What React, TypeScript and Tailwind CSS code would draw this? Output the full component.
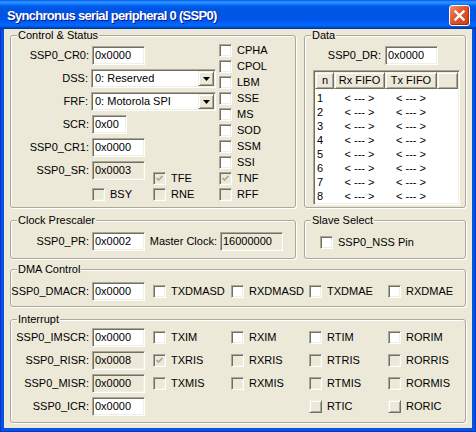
import React from "react";

// Classic XP edges
const sunken =
  "border border-t-[#aca899] border-l-[#aca899] border-b-white border-r-white shadow-[inset_1px_1px_0_#716f64,inset_-1px_-1px_0_#f1efe2]";
const raised =
  "border border-t-[#f1efe2] border-l-[#f1efe2] border-b-[#716f64] border-r-[#716f64] shadow-[inset_1px_1px_0_#fff,inset_-1px_-1px_0_#aca899] bg-[#ece9d8]";

function Group({ title, className, children }: { title: string; className: string; children?: React.ReactNode }) {
  return (
    <fieldset
      className={`min-w-0 rounded-[3px] border border-[#aca899] shadow-[inset_1px_1px_0_#fff,1px_1px_0_#fff] ${className}`}
    >
      <legend className="ml-[6px] bg-[#ece9d8] px-[1px] leading-[13px]">{title}</legend>
      {children}
    </fieldset>
  );
}

function Edit({ value, w, disabled }: { value: string; w: string; disabled?: boolean }) {
  return (
    <div
      className={`flex h-[19px] items-center whitespace-nowrap pl-[2px] leading-[13px] ${w} ${sunken} ${
        disabled ? "bg-[#ece9d8]" : "bg-white"
      }`}
    >
      {value}
    </div>
  );
}

function Combo({ value }: { value: string }) {
  return (
    <div className={`flex h-[19px] w-[125px] items-center bg-white pl-[3px] ${sunken}`}>
      <span className="flex-1 whitespace-nowrap leading-[13px]">{value}</span>
      <div className={`mr-[1px] flex h-[15px] w-[16px] items-center justify-center ${raised}`}>
        <svg width="7" height="4" viewBox="0 0 7 4">
          <polygon points="0,0 7,0 3.5,4" fill="#000" />
        </svg>
      </div>
    </div>
  );
}

function Box({ checked, disabled, button }: { checked?: boolean; disabled?: boolean; button?: boolean }) {
  if (button) return <div className={`h-[13px] w-[13px] shrink-0 ${raised}`} />;
  return (
    <div
      className={`flex h-[13px] w-[13px] shrink-0 items-center justify-center ${sunken} ${
        disabled ? "bg-[#ece9d8]" : "bg-white"
      }`}
    >
      {checked && (
        <svg width="9" height="9" viewBox="0 0 9 9">
          <polyline points="1.5,4 3.5,6 7.5,2" fill="none" stroke="#aca899" strokeWidth="1.7" />
        </svg>
      )}
    </div>
  );
}

function Check({
  label,
  checked,
  disabled,
  button,
  className = "",
}: {
  label: string;
  checked?: boolean;
  disabled?: boolean;
  button?: boolean;
  className?: string;
}) {
  return (
    <div className={`flex h-[13px] items-center gap-[5px] ${className}`}>
      <Box checked={checked} disabled={disabled} button={button} />
      <span className="whitespace-nowrap leading-[13px]">{label}</span>
    </div>
  );
}

function Row({ label, children }: { label: string; children: React.ReactNode }) {
  return (
    <div className="flex items-center">
      <span className="w-[78px] whitespace-nowrap text-right leading-[13px]">{label}</span>
      <div className="ml-[3px]">{children}</div>
    </div>
  );
}

const bits = [
  { n: "CPHA" },
  { n: "CPOL" },
  { n: "LBM" },
  { n: "SSE" },
  { n: "MS" },
  { n: "SOD" },
  { n: "SSM" },
  { n: "SSI" },
  { n: "TNF", checked: true, disabled: true },
  { n: "RFF", disabled: true },
];

const interrupts = [
  { reg: "SSP0_IMSCR:", value: "0x0000", ro: false, bits: ["TXIM", "RXIM", "RTIM", "RORIM"] },
  { reg: "SSP0_RISR:", value: "0x0008", ro: true, bits: ["TXRIS", "RXRIS", "RTRIS", "RORRIS"] },
  { reg: "SSP0_MISR:", value: "0x0000", ro: true, bits: ["TXMIS", "RXMIS", "RTMIS", "RORMIS"] },
];

export default function App() {
  return (
    <div className="flex h-[432px] w-[476px] flex-col border-x border-b border-[#0831d9] bg-[#0855dd] font-['Liberation_Sans',Arial,sans-serif] text-[11px] text-black">
      {/* Title bar */}
      <div className="-mx-px flex h-[29px] shrink-0 items-start justify-between bg-[linear-gradient(to_bottom,#0058ee_0%,#3593ff_7%,#288eff_10%,#127dff_14%,#036ffc_17%,#0262ee_20%,#0057e5_24%,#0054e3_56%,#0055eb_66%,#005bf5_76%,#026afe_86%,#0062ef_90%,#0052d6_93%,#0040ab_97%,#003092_100%)] pl-[7px] pr-[6px]">
        <span className="mt-[8px] whitespace-nowrap text-[13px] font-bold leading-[16px] tracking-[-0.7px] text-white [text-shadow:1px_1px_0_#0a1883]">
          Synchronus serial peripheral 0 (SSP0)
        </span>
        <div className="mt-[5px] flex h-[21px] w-[21px] items-center justify-center rounded-[3px] border border-white bg-[linear-gradient(135deg,#f0906c_0%,#e35a31_40%,#c8411a_100%)] shadow-[inset_-1px_-1px_1px_#a12b0c]">
          <svg width="11" height="11" viewBox="0 0 11 11">
            <path d="M1.5 1.5 L9.5 9.5 M9.5 1.5 L1.5 9.5" stroke="#fff" strokeWidth="2.3" strokeLinecap="square" />
          </svg>
        </div>
      </div>

      {/* Client area */}
      <div className="mx-[3px] mb-[3px] flex flex-1 flex-col bg-[#ece9d8] px-[6px]">
        <div className="flex gap-[8px]">
          <Group title="Control & Status" className="h-[179px] w-[286px]">
            <div className="flex">
              <div className="flex w-[205px] flex-col gap-[4px] pt-[4px]">
                <Row label="SSP0_CR0:">
                  <Edit value="0x0000" w="w-[53px]" />
                </Row>
                <Row label="DSS:">
                  <Combo value="0: Reserved" />
                </Row>
                <Row label="FRF:">
                  <Combo value="0: Motorola SPI" />
                </Row>
                <Row label="SCR:">
                  <Edit value="0x00" w="w-[35px]" />
                </Row>
                <Row label="SSP0_CR1:">
                  <Edit value="0x0000" w="w-[53px]" />
                </Row>
                <div className="flex">
                  <div className="flex flex-col">
                    <Row label="SSP0_SR:">
                      <Edit value="0x0003" w="w-[53px]" disabled />
                    </Row>
                    <Check label="BSY" disabled className="ml-[81px] mt-[8px]" />
                  </div>
                  <div className="ml-[8px] flex flex-col gap-[3px] pt-[11px]">
                    <Check label="TFE" checked disabled />
                    <Check label="RNE" disabled />
                  </div>
                </div>
              </div>
              <div className="ml-[3px] flex flex-col gap-[3px] pt-[2px]">
                {bits.map((b) => (
                  <Check key={b.n} label={b.n} checked={b.checked} disabled={b.disabled} />
                ))}
              </div>
            </div>
          </Group>

          <Group title="Data" className="h-[179px] flex-1">
            <div className="pl-px pt-[4px]">
              <div className="flex items-center">
                <span className="w-[75px] text-right leading-[13px]">SSP0_DR:</span>
                <div className="ml-[4px]">
                  <Edit value="0x0000" w="w-[53px]" />
                </div>
              </div>
              <div className={`ml-[7px] mt-[5px] h-[135px] w-[147px] overflow-hidden bg-white p-px ${sunken}`}>
                <div className="flex h-[17px]">
                  <div className={`w-[19px] pl-[6px] leading-[15px] ${raised}`}>n</div>
                  <div className={`w-[51px] text-center leading-[15px] ${raised}`}>Rx FIFO</div>
                  <div className={`w-[52px] text-center leading-[15px] ${raised}`}>Tx FIFO</div>
                  <div className={`flex-1 ${raised}`} />
                </div>
                <div className="pt-[2px]">
                  {[1, 2, 3, 4, 5, 6, 7, 8].map((n) => (
                    <div key={n} className="flex h-[14px] items-center leading-[14px]">
                      <span className="w-[19px] pl-[2px]">{n}</span>
                      <span className="w-[51px] text-center">{"< --- >"}</span>
                      <span className="w-[52px] text-center">{"< --- >"}</span>
                    </div>
                  ))}
                </div>
              </div>
            </div>
          </Group>
        </div>

        <div className="mt-[6px] flex gap-[8px]">
          <Group title="Clock Prescaler" className="h-[45px] w-[286px]">
            <div className="flex items-center pt-[5px]">
              <Row label="SSP0_PR:">
                <Edit value="0x0002" w="w-[53px]" />
              </Row>
              <span className="w-[72px] whitespace-nowrap text-right leading-[13px]">Master Clock:</span>
              <div className="ml-[3px]">
                <Edit value="16000000" w="w-[63px]" disabled />
              </div>
            </div>
          </Group>
          <Group title="Slave Select" className="h-[45px] flex-1">
            <div className="pl-[15px] pt-[9px]">
              <Check label="SSP0_NSS Pin" />
            </div>
          </Group>
        </div>

        <Group title="DMA Control" className="mt-[4px] h-[44px]">
          <div className="flex items-center pt-[6px]">
            <Row label="SSP0_DMACR:">
              <Edit value="0x0000" w="w-[53px]" />
            </Row>
            <div className="ml-[8px] flex">
              <Check label="TXDMASD" className="w-[78px]" />
              <Check label="RXDMASD" className="w-[78px]" />
              <Check label="TXDMAE" className="w-[79px]" />
              <Check label="RXDMAE" />
            </div>
          </div>
        </Group>

        <Group title="Interrupt" className="mt-[6px] h-[110px]">
          <div className="flex flex-col gap-[4px] pt-[2px]">
            {interrupts.map((r) => (
              <div key={r.reg} className="flex items-center">
                <Row label={r.reg}>
                  <Edit value={r.value} w="w-[53px]" disabled={r.ro} />
                </Row>
                <div className="ml-[8px] flex">
                  {r.bits.map((b, i) => (
                    <Check
                      key={b}
                      label={b}
                      disabled={r.ro}
                      checked={b === "TXRIS"}
                      className={i === 2 ? "w-[79px]" : "w-[78px]"}
                    />
                  ))}
                </div>
              </div>
            ))}
            <div className="flex items-center">
              <Row label="SSP0_ICR:">
                <Edit value="0x0000" w="w-[53px]" />
              </Row>
              <div className="ml-[164px] flex">
                <Check label="RTIC" button className="w-[79px]" />
                <Check label="RORIC" button />
              </div>
            </div>
          </div>
        </Group>
      </div>
    </div>
  );
}
